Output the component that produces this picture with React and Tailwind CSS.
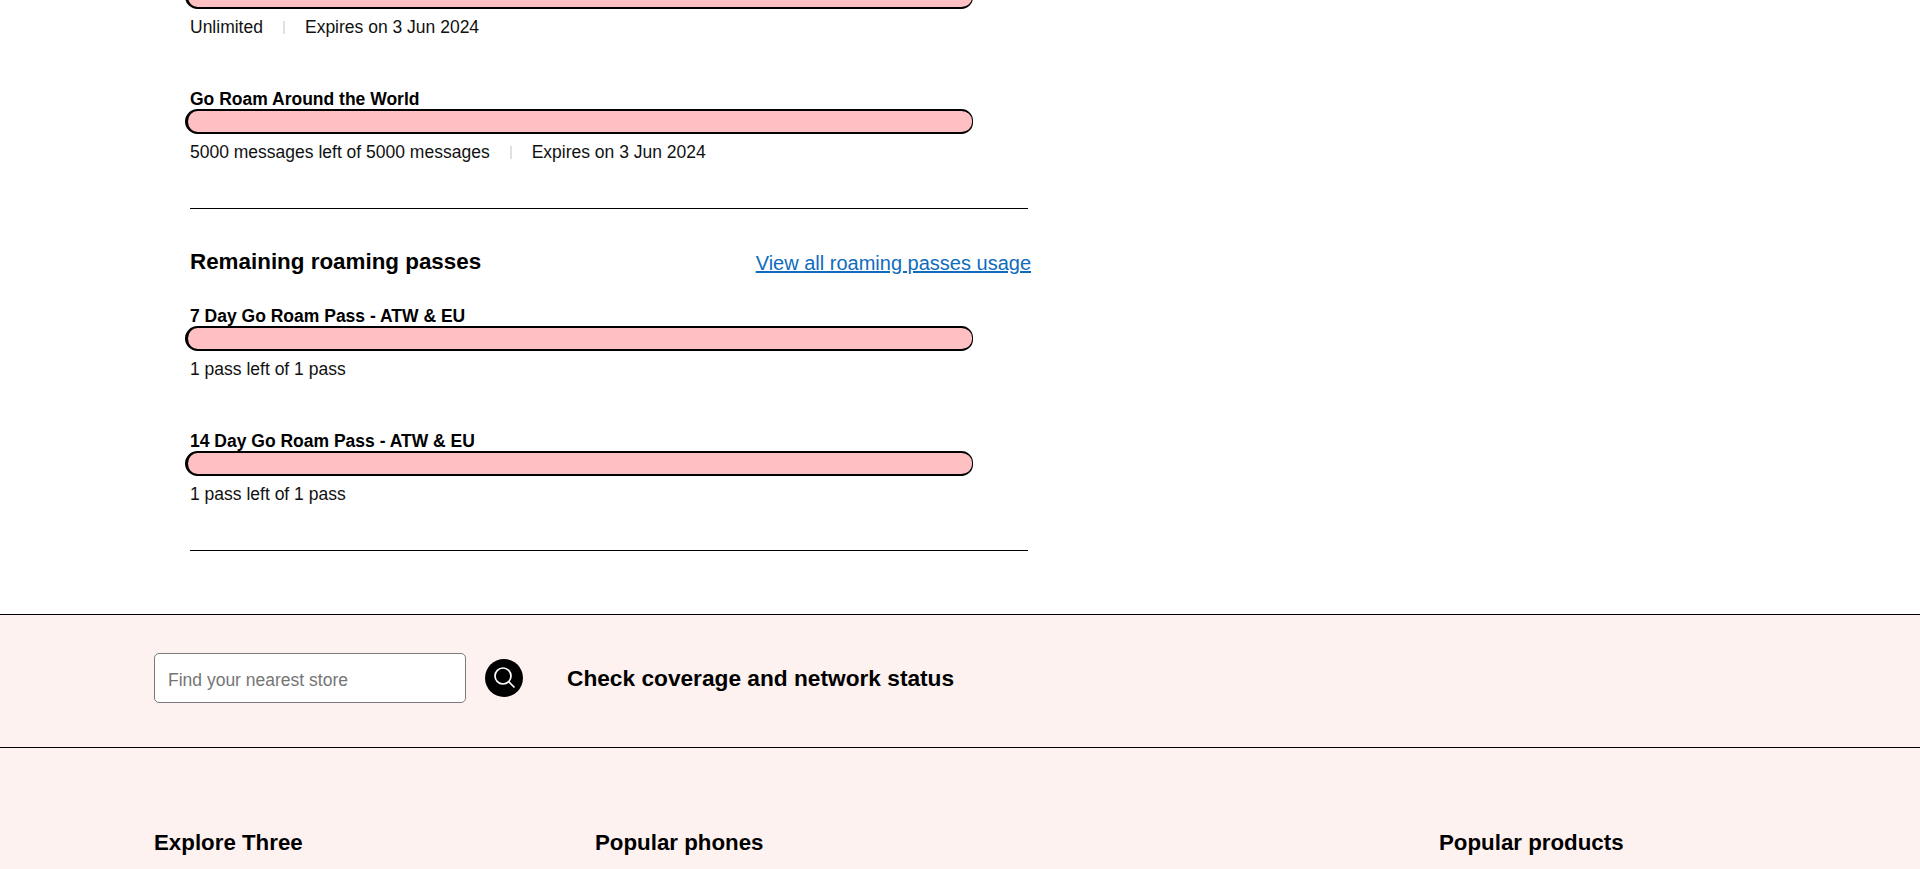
import React from "react";

const font = { fontFamily: '"Liberation Sans", Arial, sans-serif' };

const Bar = () => (
  <div className="h-[25px] w-[788px] -ml-[5px] rounded-l-[13px] rounded-r-[12px] border-y-2 border-l-[3px] border-r border-black bg-[#ffc0c4]" />
);

const Meta = ({ left, expires }) => (
  <div className="mt-[6px] flex h-[24px] items-center text-[17.5px] leading-[24px] text-[#111]">
    <span>{left}</span>
    {expires && (
      <>
        <span className="mx-[20px] h-[13px] w-[2px] bg-[#e0e0e0]" />
        <span>{expires}</span>
      </>
    )}
  </div>
);

const Allowance = ({ title, left, expires, className = "" }) => (
  <div className={className}>
    <div className="h-[22px] text-[17.5px] font-bold leading-[25px] text-black">{title}</div>
    <Bar />
    <Meta left={left} expires={expires} />
  </div>
);

const App = () => {
  return (
    <div className="h-[869px] overflow-hidden bg-white" style={font}>
      <main className="pl-[190px]">
        <div className="-mt-[16px]">
          <Bar />
          <Meta left="Unlimited" expires="Expires on 3 Jun 2024" />
        </div>
        <Allowance
          className="mt-[48px]"
          title="Go Roam Around the World"
          left="5000 messages left of 5000 messages"
          expires="Expires on 3 Jun 2024"
        />
        <hr className="mt-[44px] w-[838px] border-t border-black" />
        <div className="mt-[39px] flex h-[28px] w-[841px] items-center justify-between">
          <h2 className="text-[22.4px] font-bold leading-[28px] text-black">Remaining roaming passes</h2>
          <a href="#" className="mt-[1px] text-[20px] leading-[24px] text-[#0f6cbd] underline">
            View all roaming passes usage
          </a>
        </div>
        <Allowance className="mt-[28px]" title="7 Day Go Roam Pass - ATW & EU" left="1 pass left of 1 pass" />
        <Allowance className="mt-[48px]" title="14 Day Go Roam Pass - ATW & EU" left="1 pass left of 1 pass" />
        <hr className="mt-[44px] w-[838px] border-t border-black" />
      </main>

      <footer className="mt-[63px] bg-[#fef2f0] pb-[80px]">
        <div className="flex h-[134px] items-center border-y border-black pb-[7px] pl-[154px]">
          <div className="flex h-[50px] w-[312px] items-center rounded-[5px] border border-[#7a7a7a] bg-white pl-[13px] pt-[6px] text-[17.5px] text-[#757575]">
            Find your nearest store
          </div>
          <button className="ml-[19px] flex h-[38px] w-[38px] items-center justify-center rounded-full bg-black">
            <svg width="26" height="26" viewBox="0 0 26 26" fill="none" stroke="white" strokeWidth="1.7" strokeLinecap="round">
              <circle cx="12" cy="11" r="8" />
              <path d="M18 17l5 5" />
            </svg>
          </button>
          <span className="ml-[44px] pt-[1px] text-[22.7px] font-bold text-black">Check coverage and network status</span>
        </div>
        <div className="flex pl-[154px] pt-[81px] text-[22.3px] font-bold leading-[28px] text-black">
          <h3 className="w-[441px]">Explore Three</h3>
          <h3 className="w-[844px]">Popular phones</h3>
          <h3>Popular products</h3>
        </div>
      </footer>
    </div>
  );
};

export default App;
